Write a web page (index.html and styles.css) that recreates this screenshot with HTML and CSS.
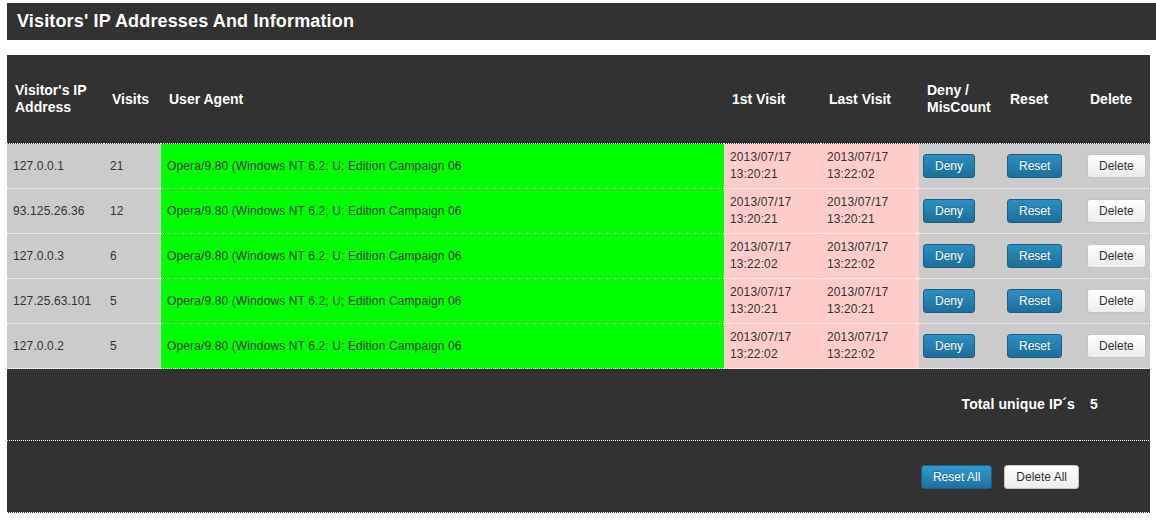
FILE: index.html
```html
<!DOCTYPE html>
<html>
<head>
<meta charset="utf-8">
<title>Visitors' IP Addresses And Information</title>
<link rel="stylesheet" href="styles.css">
</head>
<body>
<div class="page">
  <h1 class="title">Visitors' IP Addresses And Information</h1>
  <table class="visitors">
    <colgroup>
      <col class="c-ip"><col class="c-visits"><col class="c-ua"><col class="c-first"><col class="c-last"><col class="c-deny"><col class="c-reset"><col class="c-delete">
    </colgroup>
    <thead>
      <tr>
        <th>Visitor's IP<br>Address</th>
        <th>Visits</th>
        <th>User Agent</th>
        <th>1st Visit</th>
        <th>Last Visit</th>
        <th class="h-deny">Deny /<br>MisCount</th>
        <th class="h-reset">Reset</th>
        <th class="h-delete">Delete</th>
      </tr>
    </thead>
    <tbody>
      <tr>
        <td class="grey">127.0.0.1</td><td class="grey">21</td>
        <td class="green">Opera/9.80 (Windows NT 6.2; U; Edition Campaign 06</td>
        <td class="pink">2013/07/17<br>13:20:21</td><td class="pink">2013/07/17<br>13:22:02</td>
        <td class="grey b-deny"><button class="btn btn-blue">Deny</button></td>
        <td class="grey b-reset"><button class="btn btn-blue">Reset</button></td>
        <td class="grey b-delete"><button class="btn btn-white">Delete</button></td>
      </tr>
      <tr>
        <td class="grey">93.125.26.36</td><td class="grey">12</td>
        <td class="green">Opera/9.80 (Windows NT 6.2; U; Edition Campaign 06</td>
        <td class="pink">2013/07/17<br>13:20:21</td><td class="pink">2013/07/17<br>13:20:21</td>
        <td class="grey b-deny"><button class="btn btn-blue">Deny</button></td>
        <td class="grey b-reset"><button class="btn btn-blue">Reset</button></td>
        <td class="grey b-delete"><button class="btn btn-white">Delete</button></td>
      </tr>
      <tr>
        <td class="grey">127.0.0.3</td><td class="grey">6</td>
        <td class="green">Opera/9.80 (Windows NT 6.2; U; Edition Campaign 06</td>
        <td class="pink">2013/07/17<br>13:22:02</td><td class="pink">2013/07/17<br>13:22:02</td>
        <td class="grey b-deny"><button class="btn btn-blue">Deny</button></td>
        <td class="grey b-reset"><button class="btn btn-blue">Reset</button></td>
        <td class="grey b-delete"><button class="btn btn-white">Delete</button></td>
      </tr>
      <tr>
        <td class="grey">127.25.63.101</td><td class="grey">5</td>
        <td class="green">Opera/9.80 (Windows NT 6.2; U; Edition Campaign 06</td>
        <td class="pink">2013/07/17<br>13:20:21</td><td class="pink">2013/07/17<br>13:20:21</td>
        <td class="grey b-deny"><button class="btn btn-blue">Deny</button></td>
        <td class="grey b-reset"><button class="btn btn-blue">Reset</button></td>
        <td class="grey b-delete"><button class="btn btn-white">Delete</button></td>
      </tr>
      <tr>
        <td class="grey">127.0.0.2</td><td class="grey">5</td>
        <td class="green">Opera/9.80 (Windows NT 6.2; U; Edition Campaign 06</td>
        <td class="pink">2013/07/17<br>13:22:02</td><td class="pink">2013/07/17<br>13:22:02</td>
        <td class="grey b-deny"><button class="btn btn-blue">Deny</button></td>
        <td class="grey b-reset"><button class="btn btn-blue">Reset</button></td>
        <td class="grey b-delete"><button class="btn btn-white">Delete</button></td>
      </tr>
    </tbody>
    <tfoot>
      <tr class="foot">
        <td colspan="7" class="total-label">Total unique IP´s</td>
        <td class="total-value">5</td>
      </tr>
      <tr class="foot">
        <td colspan="7" class="actions">
          <div class="action-group">
            <button class="btn btn-blue btn-bright">Reset All</button>
            <button class="btn btn-white">Delete All</button>
          </div>
        </td>
        <td></td>
      </tr>
    </tfoot>
  </table>
</div>
</body>
</html>
```

FILE: styles.css
```css
html, body {
  margin: 0;
  padding: 0;
  background: #fff;
}
body {
  font-family: "Liberation Sans", Arial, sans-serif;
  overflow: hidden;
}
.page {
  padding: 3px 0 0 7px;
}
.title {
  margin: 0 0 15px 0;
  height: 37px;
  line-height: 37px;
  padding-left: 10px;
  background: #323232;
  color: #fff;
  font-size: 18px;
  font-weight: bold;
  letter-spacing: 0.15px;
}
.visitors {
  width: 1143px;
  table-layout: fixed;
  border-collapse: separate;
  border-spacing: 0;
}
.c-ip { width: 97px; }
.c-visits { width: 57px; }
.c-ua { width: 563px; }
.c-first { width: 97px; }
.c-last { width: 98px; }
.c-deny { width: 81px; }
.c-reset { width: 80px; }
.c-delete { width: 70px; }

.visitors th,
.visitors td {
  box-sizing: border-box;
  border: 0;
  padding-bottom: 1px;
  background-image: linear-gradient(90deg, #fff 1px, transparent 1px);
  background-size: 2px 1px;
  background-repeat: repeat-x;
  background-position: left bottom;
}

.visitors th {
  background-color: #323232;
  color: #fff;
  font-size: 14px;
  font-weight: bold;
  line-height: 17px;
  text-align: left;
  vertical-align: middle;
  height: 89px;
  padding-top: 0;
  padding-left: 8px;
  padding-right: 2px;
}
.visitors th.h-reset { padding-left: 10px; }
.visitors th.h-delete { padding-left: 10px; }
.visitors td {
  font-size: 12px;
  line-height: 17px;
  letter-spacing: 0.12px;
  color: #333;
  height: 45px;
  padding-top: 0;
  padding-left: 6px;
  padding-right: 4px;
  vertical-align: middle;
  white-space: nowrap;
  overflow: hidden;
}
.grey { background-color: #cbcbcb; }
.green { background-color: #00ff00; }
.pink { background-color: #ffcccc; }
.visitors td.b-deny { padding-left: 4px; }
.visitors td.b-reset { padding-left: 7px; }
.visitors td.b-delete { padding-left: 7px; }

.btn {
  font-family: "Liberation Sans", Arial, sans-serif;
  font-size: 12px;
  line-height: 16px;
  letter-spacing: 0;
  padding: 3px 11px;
  border-radius: 3px;
  cursor: pointer;
  margin: 0;
  display: inline-block;
}
.btn-blue {
  color: #fff;
  background: linear-gradient(#2b8fc2, #1e6e98);
  border: 1px solid #1b5f83;
  text-shadow: 0 -1px 0 rgba(0,0,0,0.2);
}
.btn-bright {
  background: linear-gradient(#2f9ad0, #1f719b);
}
.btn-white {
  color: #333;
  background: linear-gradient(#ffffff, #ececec);
  border: 1px solid #c4c4c4;
}

.visitors tr.foot td {
  background-color: #323232;
  color: #fff;
  height: 72px;
  font-size: 14px;
  font-weight: bold;
  letter-spacing: 0.1px;
}
.visitors td.total-label {
  text-align: right;
  padding-right: 5px;
}
.visitors td.total-value {
  padding-left: 10px;
}
.visitors td.actions {
  padding-right: 1px;
}
.action-group {
  display: flex;
  justify-content: flex-end;
  gap: 12px;
}
.action-group .btn {
  font-weight: normal;
}
```
